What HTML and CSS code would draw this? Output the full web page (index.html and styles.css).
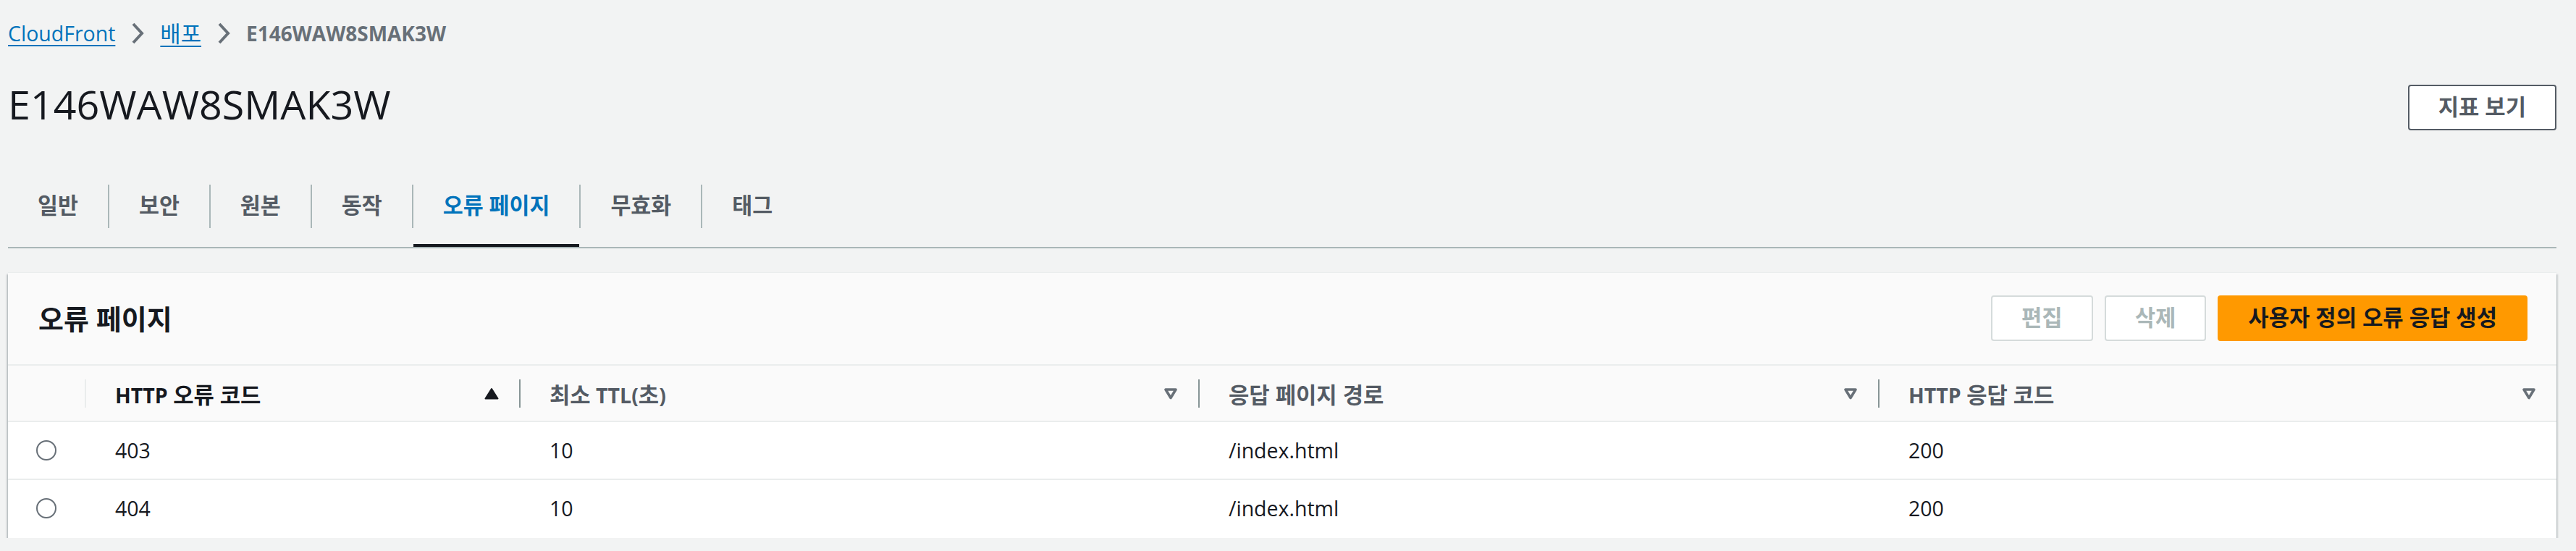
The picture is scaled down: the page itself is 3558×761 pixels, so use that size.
FILE: index.html
```html
<!DOCTYPE html>
<html lang="ko">
<head>
<meta charset="utf-8">
<title>E146WAW8SMAK3W | CloudFront</title>
<link rel="stylesheet" href="styles.css">
</head>
<body>
<nav class="breadcrumbs">
  <a class="crumb-link" href="#">CloudFront</a>
  <span class="crumb-sep"><svg width="18" height="30" viewBox="0 0 18 30"><polyline points="3,2 15,15 3,28" fill="none" stroke="#687078" stroke-width="4"/></svg></span>
  <a class="crumb-link ko" href="#">배포</a>
  <span class="crumb-sep"><svg width="18" height="30" viewBox="0 0 18 30"><polyline points="3,2 15,15 3,28" fill="none" stroke="#687078" stroke-width="4"/></svg></span>
  <span class="crumb-current">E146WAW8SMAK3W</span>
</nav>

<header class="page-header">
  <h1 class="page-title">E146WAW8SMAK3W</h1>
  <button class="btn btn-normal" type="button">지표 보기</button>
</header>

<nav class="tabs">
  <div class="tab"><span class="tab-label">일반</span></div>
  <div class="tab"><span class="tab-label">보안</span></div>
  <div class="tab"><span class="tab-label">원본</span></div>
  <div class="tab"><span class="tab-label">동작</span></div>
  <div class="tab active"><span class="tab-label">오류 페이지</span></div>
  <div class="tab"><span class="tab-label">무효화</span></div>
  <div class="tab"><span class="tab-label">태그</span></div>
</nav>

<section class="container">
  <div class="container-header">
    <h2 class="container-title">오류 페이지</h2>
    <div class="actions">
      <button class="btn btn-disabled" type="button" disabled>편집</button>
      <button class="btn btn-disabled" type="button" disabled>삭제</button>
      <button class="btn btn-primary" type="button">사용자 정의 오류 응답 생성</button>
    </div>
  </div>
  <div class="table">
    <div class="table-row table-head">
      <div class="th-select"></div>
      <div class="th th-light sorted">
        <span>HTTP <span class="ko">오류 코드</span></span>
        <svg class="sort-icon" width="20" height="17" viewBox="0 0 20 17"><path d="M10 2 L18.5 15.5 H1.5 Z" fill="#16191f" stroke="#16191f" stroke-width="2" stroke-linejoin="round"/></svg>
      </div>
      <div class="th">
        <span><span class="ko">최소</span> TTL(<span class="ko">초</span>)</span>
        <svg class="sort-icon" width="20" height="17" viewBox="0 0 20 17"><path d="M3 3 H17 L10 14.5 Z" fill="none" stroke="#687078" stroke-width="3.6" stroke-linejoin="round"/></svg>
      </div>
      <div class="th">
        <span class="ko">응답 페이지 경로</span>
        <svg class="sort-icon" width="20" height="17" viewBox="0 0 20 17"><path d="M3 3 H17 L10 14.5 Z" fill="none" stroke="#687078" stroke-width="3.6" stroke-linejoin="round"/></svg>
      </div>
      <div class="th">
        <span>HTTP <span class="ko">응답 코드</span></span>
        <svg class="sort-icon" width="20" height="17" viewBox="0 0 20 17"><path d="M3 3 H17 L10 14.5 Z" fill="none" stroke="#687078" stroke-width="3.6" stroke-linejoin="round"/></svg>
      </div>
    </div>
    <div class="table-row">
      <div class="td-select"><span class="radio"></span></div>
      <div class="td">403</div>
      <div class="td">10</div>
      <div class="td">/index.html</div>
      <div class="td">200</div>
    </div>
    <div class="table-row">
      <div class="td-select"><span class="radio"></span></div>
      <div class="td">404</div>
      <div class="td">10</div>
      <div class="td">/index.html</div>
      <div class="td">200</div>
    </div>
  </div>
</section>
</body>
</html>
```

FILE: styles.css
```css
html, body {
  margin: 0;
}

body {
  background: #f2f3f3;
  color: #16191f;
  font-family: "Open Sans", "Noto Sans CJK KR", sans-serif;
  font-size: 28.5px;
  padding: 26px 27px 0 11px;
}

/* Korean runs are set slightly larger so Hangul matches the original metrics */
.ko {
  font-size: 30.8px;
}

/* Breadcrumbs */
.breadcrumbs {
  display: flex;
  align-items: center;
  height: 40px;
  line-height: 40px;
}

.crumb-link {
  color: #0073bb;
  text-decoration: underline;
  text-decoration-thickness: 2px;
  text-underline-offset: 5px;
}

.crumb-sep {
  display: flex;
  margin: 0 22px;
}

.crumb-current {
  font-size: 28px;
  font-weight: 700;
  color: #687078;
}

/* Page header */
.page-header {
  display: flex;
  justify-content: space-between;
  align-items: flex-start;
  margin-top: 51px;
}

.page-title {
  margin: 0;
  font-size: 55.6px;
  font-weight: 400;
  line-height: 53px;
  color: #16191f;
}

/* Buttons */
.btn {
  font: inherit;
  font-size: 30.8px;
  font-weight: 700;
  line-height: 57px;
  padding: 0 40px 2px;
  border: 2px solid;
  border-radius: 4px;
  background: #fff;
  margin: 0;
  cursor: pointer;
}

.btn-normal {
  border-color: #545b64;
  color: #545b64;
}

.btn-disabled {
  border-color: #d5dbdb;
  color: #aab7b8;
  background: #fff;
  cursor: default;
}

.btn-primary {
  background: #ff9900;
  border-color: #ff9900;
  color: #16191f;
}

/* Tabs */
.tabs {
  display: flex;
  margin-top: 75px;
  border-bottom: 2px solid #aab7b8;
}

.tab {
  position: relative;
  padding-bottom: 26px;
}

.tab-label {
  display: block;
  padding: 0 41px 2px;
  font-size: 30.4px;
  line-height: 58px;
  font-weight: 700;
  color: #545b64;
}

.tab + .tab .tab-label {
  border-left: 2px solid #aab7b8;
}

.tab.active .tab-label {
  color: #0073bb;
}

.tab.active::after {
  content: "";
  position: absolute;
  left: 2px;
  right: 0;
  bottom: 0;
  height: 4px;
  background: #16191f;
}

/* Container */
.container {
  margin-top: 34px;
  background: #fff;
  box-shadow: 0 -1px 0 0 #eaeded,
    0 2px 2px 0 rgba(0, 28, 36, 0.3),
    2px 2px 2px 0 rgba(0, 28, 36, 0.15),
    -2px 2px 2px 0 rgba(0, 28, 36, 0.15);
}

.container-header {
  display: flex;
  align-items: center;
  justify-content: space-between;
  padding: 31px 40px 32px 42px;
  background: #fafafa;
  border-bottom: 2px solid #eaeded;
}

.container-title {
  margin: 0;
  font-size: 38px;
  font-weight: 700;
  line-height: 44px;
  color: #16191f;
}

.actions {
  display: flex;
  gap: 16px;
}

/* Table */
.table-row {
  display: grid;
  grid-template-columns: 106px 600px 938px 939px 1fr;
  align-items: center;
  height: 78px;
  border-bottom: 2px solid #eaeded;
}

.table-row:last-child {
  border-bottom-color: #fff;
}

.table-head {
  height: 76px;
  background: #fafafa;
}

.th {
  display: flex;
  align-items: center;
  justify-content: space-between;
  height: 39px;
  padding: 0 28px 0 40px;
  border-left: 2px solid #879596;
  font-weight: 700;
  color: #545b64;
}

.th-light {
  border-left-color: #eaeded;
}

.th.sorted {
  color: #16191f;
}

.sort-icon {
  display: block;
  flex: none;
}

.td {
  padding-left: 42px;
  white-space: nowrap;
}

.td-select {
  display: flex;
  justify-content: center;
}

.radio {
  display: block;
  width: 28px;
  height: 28px;
  box-sizing: border-box;
  border: 2.5px solid #687078;
  border-radius: 50%;
  background: #fff;
}
```
